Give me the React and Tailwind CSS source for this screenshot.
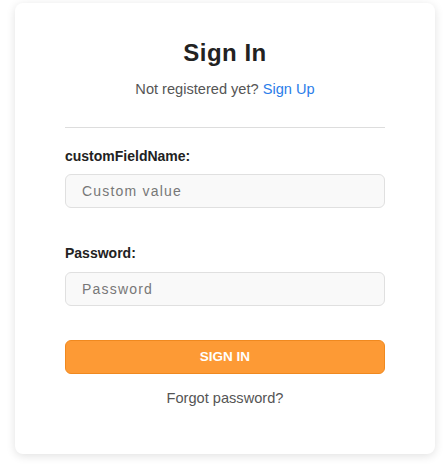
export default function App() {
  return (
    <div className="min-h-[468px] bg-white px-[15px] pt-[3px] font-['Liberation_Sans',Arial,sans-serif]">
      <div className="w-[420px] h-[451px] rounded-lg bg-white shadow-[0_2px_10px_rgba(0,0,0,0.12)] px-[50px] pt-[34px]">
        <h1 className="text-center text-[24px] leading-8 font-bold text-[#222] tracking-[0.5px]">Sign In</h1>
        <p className="mt-[10px] text-center text-[14.6px] leading-5 text-[#555]">
          Not registered yet? <a className="text-[#2b7de9]">Sign Up</a>
        </p>
        <div className="mt-[28px] h-px bg-[#dddddd]" />
        <form className="mt-[18px]">
          <label className="block text-[14px] leading-5 font-bold text-[#222]">customFieldName:</label>
          <input
            className="mt-[8px] block w-full h-[34px] rounded-md border border-[#e0e0e0] bg-[#f9f9f9] px-4 text-[14px] tracking-[1.2px] text-[#333] placeholder:text-[#777] outline-none"
            placeholder="Custom value"
          />
          <label className="mt-[35px] block text-[14px] leading-5 font-bold text-[#222]">Password:</label>
          <input
            type="password"
            className="mt-[9px] block w-full h-[34px] rounded-md border border-[#e0e0e0] bg-[#f9f9f9] px-4 text-[14px] tracking-[1.2px] text-[#333] placeholder:text-[#777] outline-none"
            placeholder="Password"
          />
          <button
            type="button"
            className="mt-[34px] block w-full h-[34px] rounded-md border border-[#f0891f] bg-[#fd9a35] text-[13.5px] font-bold text-white"
          >
            SIGN IN
          </button>
          <p className="mt-[14px] text-center text-[14.6px] leading-5 text-[#555]">Forgot password?</p>
        </form>
      </div>
    </div>
  );
}
